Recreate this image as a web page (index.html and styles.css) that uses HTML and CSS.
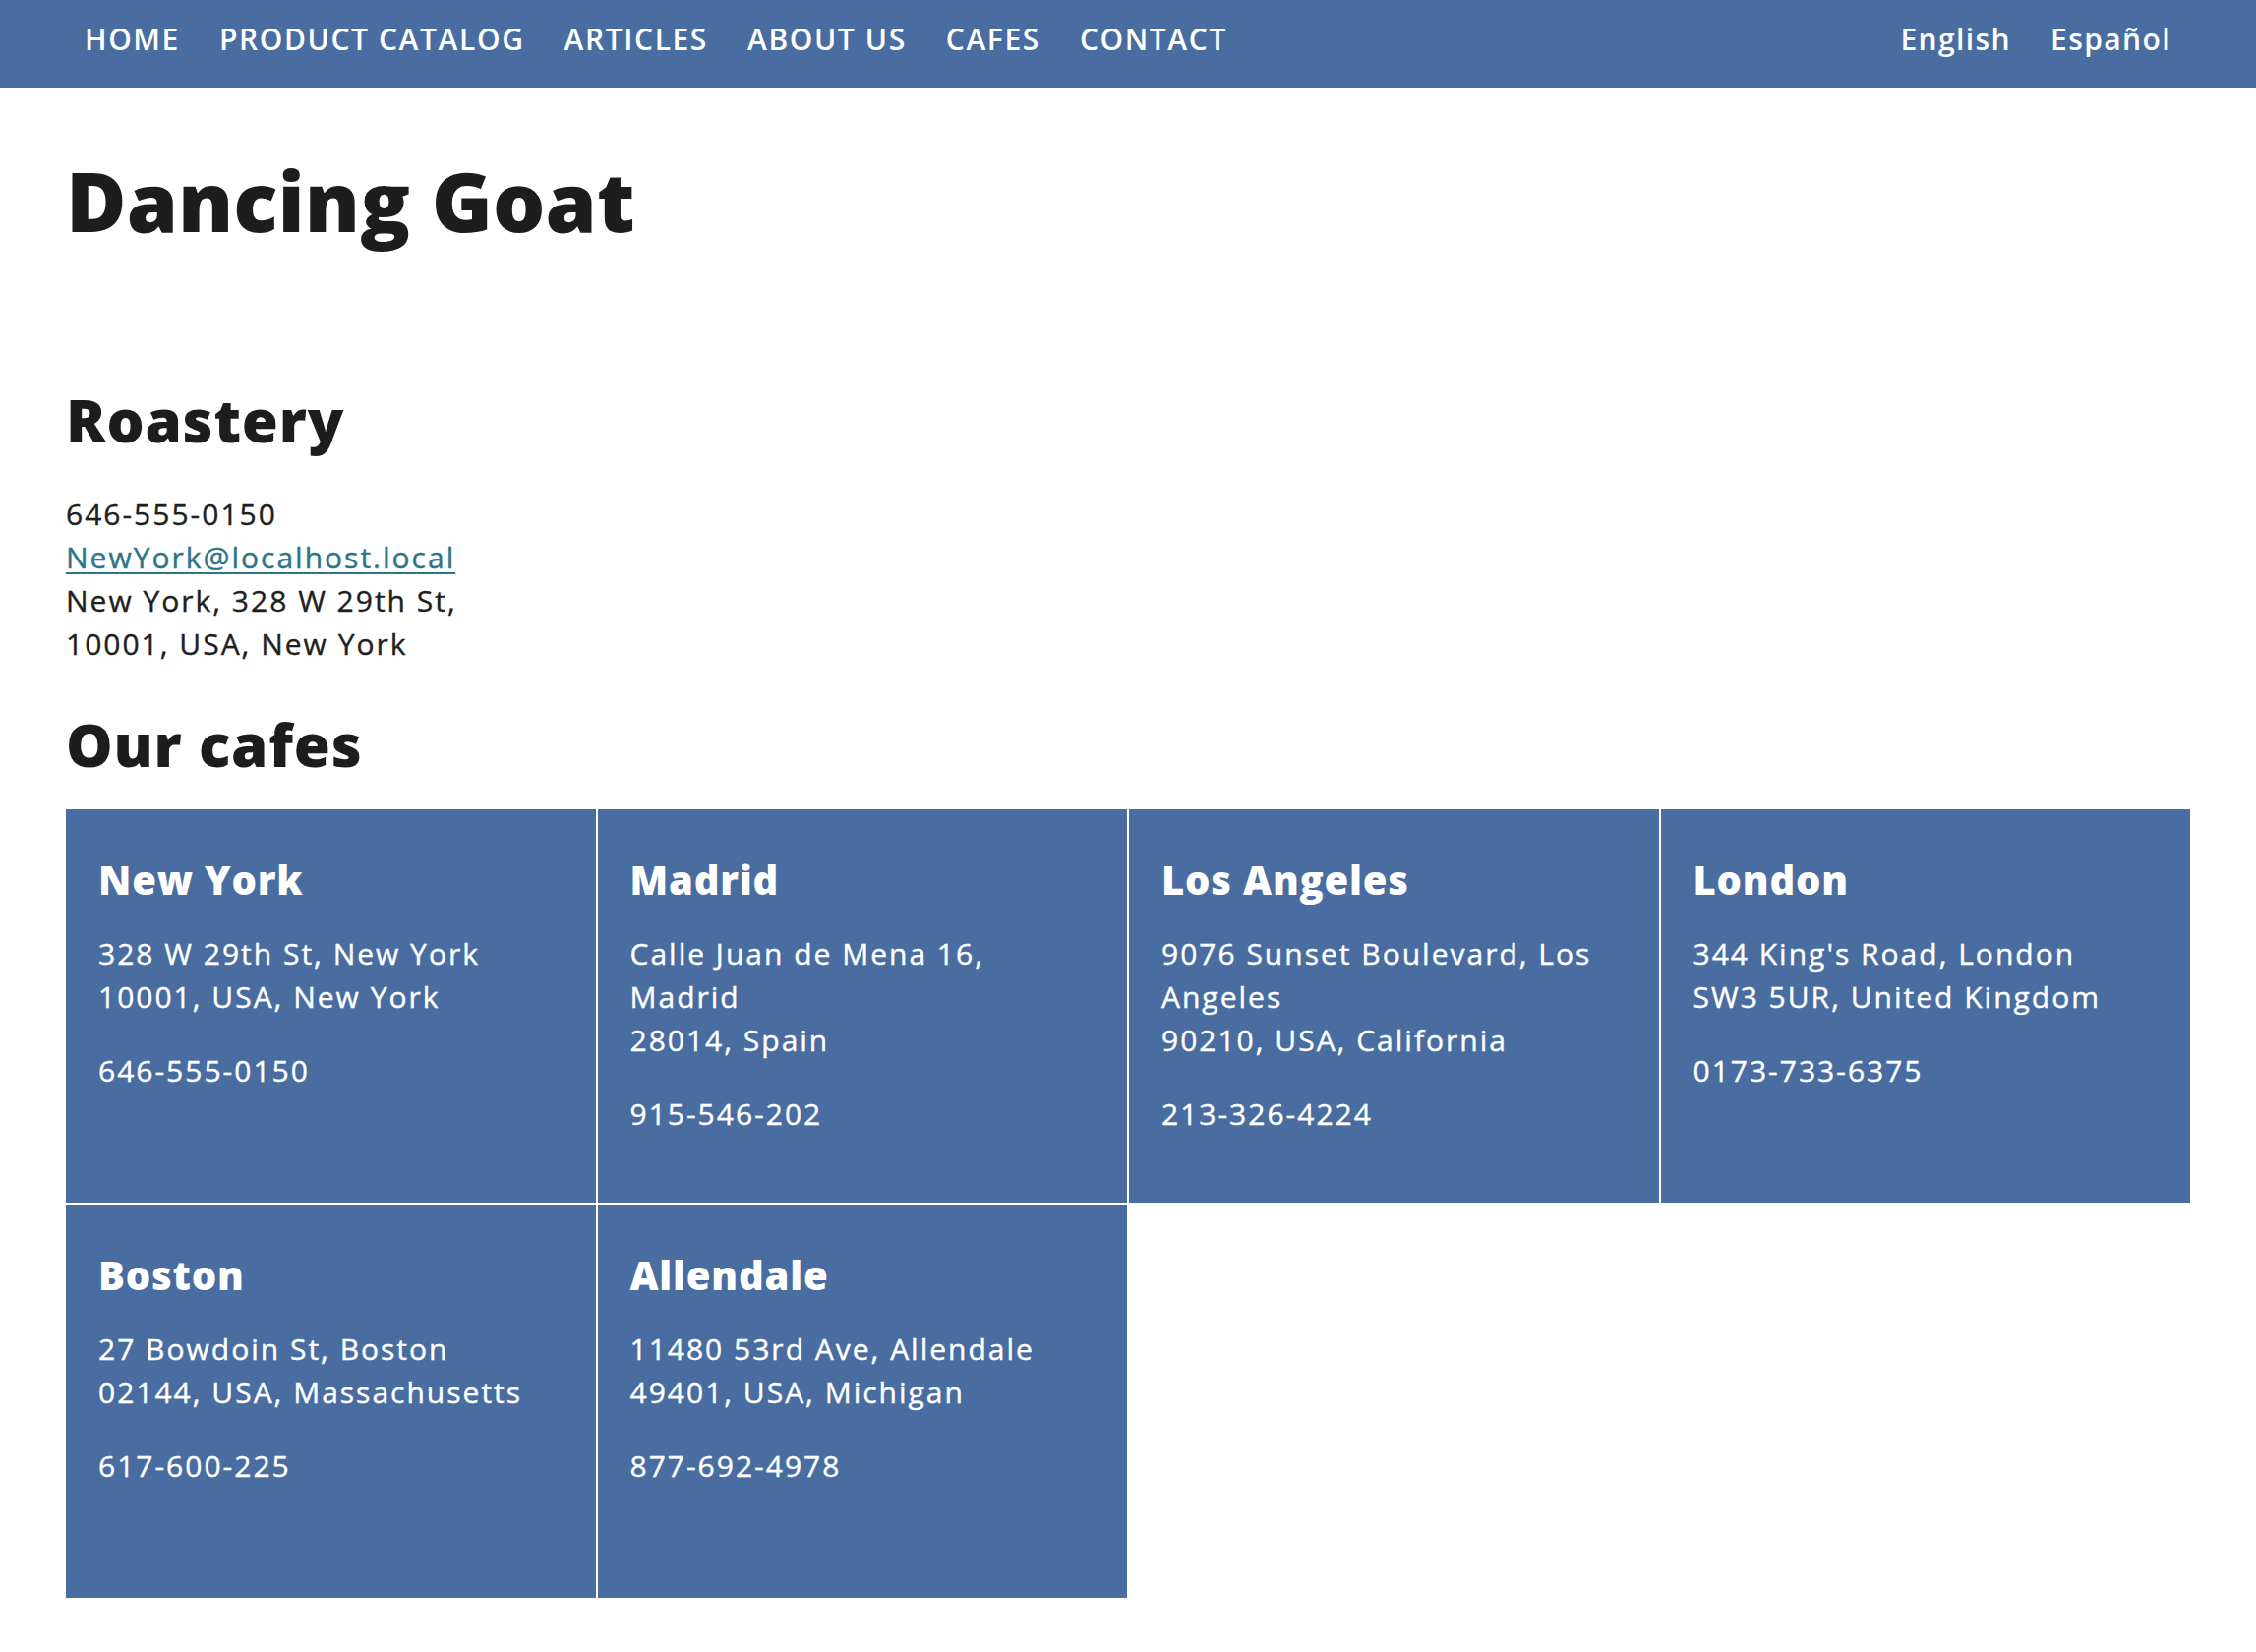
FILE: index.html
```html
<!DOCTYPE html>
<html lang="en">
<head>
<meta charset="utf-8">
<title>Cafes - Dancing Goat</title>
<link rel="stylesheet" href="styles.css">
</head>
<body>
<header class="topbar">
  <nav class="main-nav">
    <a href="#">HOME</a>
    <a href="#">PRODUCT CATALOG</a>
    <a href="#">ARTICLES</a>
    <a href="#">ABOUT US</a>
    <a href="#">CAFES</a>
    <a href="#">CONTACT</a>
  </nav>
  <nav class="lang-nav">
    <a href="#">English</a>
    <a href="#">Español</a>
  </nav>
</header>
<main class="page">
  <h1 class="site-title">Dancing Goat</h1>
  <section class="roastery">
    <h2 class="section-title">Roastery</h2>
    <p class="contact">646-555-0150<br><a class="mail" href="#">NewYork@localhost.local</a><br>New York, 328 W 29th St,<br>10001, USA, New York</p>
  </section>
  <section class="cafes">
    <h2 class="section-title cafes-title">Our cafes</h2>
    <div class="cafe-grid">
      <article class="cafe">
        <h3 class="cafe-name">New York</h3>
        <p class="cafe-address">328 W 29th St, New York<br>10001, USA, New York</p>
        <p class="cafe-phone">646-555-0150</p>
      </article>
      <article class="cafe">
        <h3 class="cafe-name">Madrid</h3>
        <p class="cafe-address">Calle Juan de Mena 16,<br>Madrid<br>28014, Spain</p>
        <p class="cafe-phone">915-546-202</p>
      </article>
      <article class="cafe">
        <h3 class="cafe-name">Los Angeles</h3>
        <p class="cafe-address">9076 Sunset Boulevard, Los<br>Angeles<br>90210, USA, California</p>
        <p class="cafe-phone">213-326-4224</p>
      </article>
      <article class="cafe">
        <h3 class="cafe-name">London</h3>
        <p class="cafe-address">344 King's Road, London<br>SW3 5UR, United Kingdom</p>
        <p class="cafe-phone">0173-733-6375</p>
      </article>
      <article class="cafe">
        <h3 class="cafe-name">Boston</h3>
        <p class="cafe-address">27 Bowdoin St, Boston<br>02144, USA, Massachusetts</p>
        <p class="cafe-phone">617-600-225</p>
      </article>
      <article class="cafe">
        <h3 class="cafe-name">Allendale</h3>
        <p class="cafe-address">11480 53rd Ave, Allendale<br>49401, USA, Michigan</p>
        <p class="cafe-phone">877-692-4978</p>
      </article>
    </div>
  </section>
</main>
</body>
</html>
```

FILE: styles.css
```css
* {
  box-sizing: border-box;
}

html, body {
  margin: 0;
  padding: 0;
  background: #ffffff;
}

body {
  font-family: "Open Sans", "DejaVu Sans", sans-serif;
  color: #1f1f1f;
  font-size: 30px;
}

a {
  text-decoration: none;
  color: inherit;
}

.topbar {
  display: flex;
  justify-content: space-between;
  align-items: flex-start;
  height: 89px;
  padding: 20px 86px 29px 86px;
  background: #496da0;
  color: #ffffff;
}

.main-nav,
.lang-nav {
  display: flex;
  line-height: 40px;
  font-weight: 600;
}

.main-nav {
  gap: 40px;
  letter-spacing: 1.6px;
}

.lang-nav {
  gap: 40px;
  letter-spacing: 1.4px;
}

.page {
  padding: 0 67px;
}

.site-title {
  margin: 65px 0 0;
  font-size: 84px;
  line-height: 1.2;
  font-weight: 800;
  letter-spacing: 0;
  color: #1d1d1d;
}

.section-title {
  margin: 136px 0 38px;
  font-size: 60px;
  line-height: 72px;
  font-weight: 800;
  letter-spacing: 0.8px;
  color: #1d1d1d;
}

.cafes-title {
  margin: 44px 0 30px;
}

.contact {
  margin: 0;
  line-height: 44px;
  letter-spacing: 2px;
  -webkit-text-stroke: 0.4px currentColor;
}

.mail {
  color: #2d7489;
  text-decoration: underline;
  text-underline-offset: 4px;
  text-decoration-thickness: 2px;
}

.cafe-grid {
  display: grid;
  grid-template-columns: repeat(4, 1fr);
  grid-auto-rows: 400px;
  gap: 2px;
}

.cafe {
  background: #496da0;
  color: #ffffff;
  padding: 48px 33px 0;
}

.cafe-name {
  margin: 0;
  font-size: 40px;
  line-height: 48px;
  font-weight: 800;
  letter-spacing: 0.8px;
}

.cafe-address,
.cafe-phone {
  line-height: 44px;
  letter-spacing: 2px;
  -webkit-text-stroke: 0.4px currentColor;
}

.cafe-address {
  margin: 29px 0 0;
}

.cafe-phone {
  margin: 31px 0 0;
}
```
